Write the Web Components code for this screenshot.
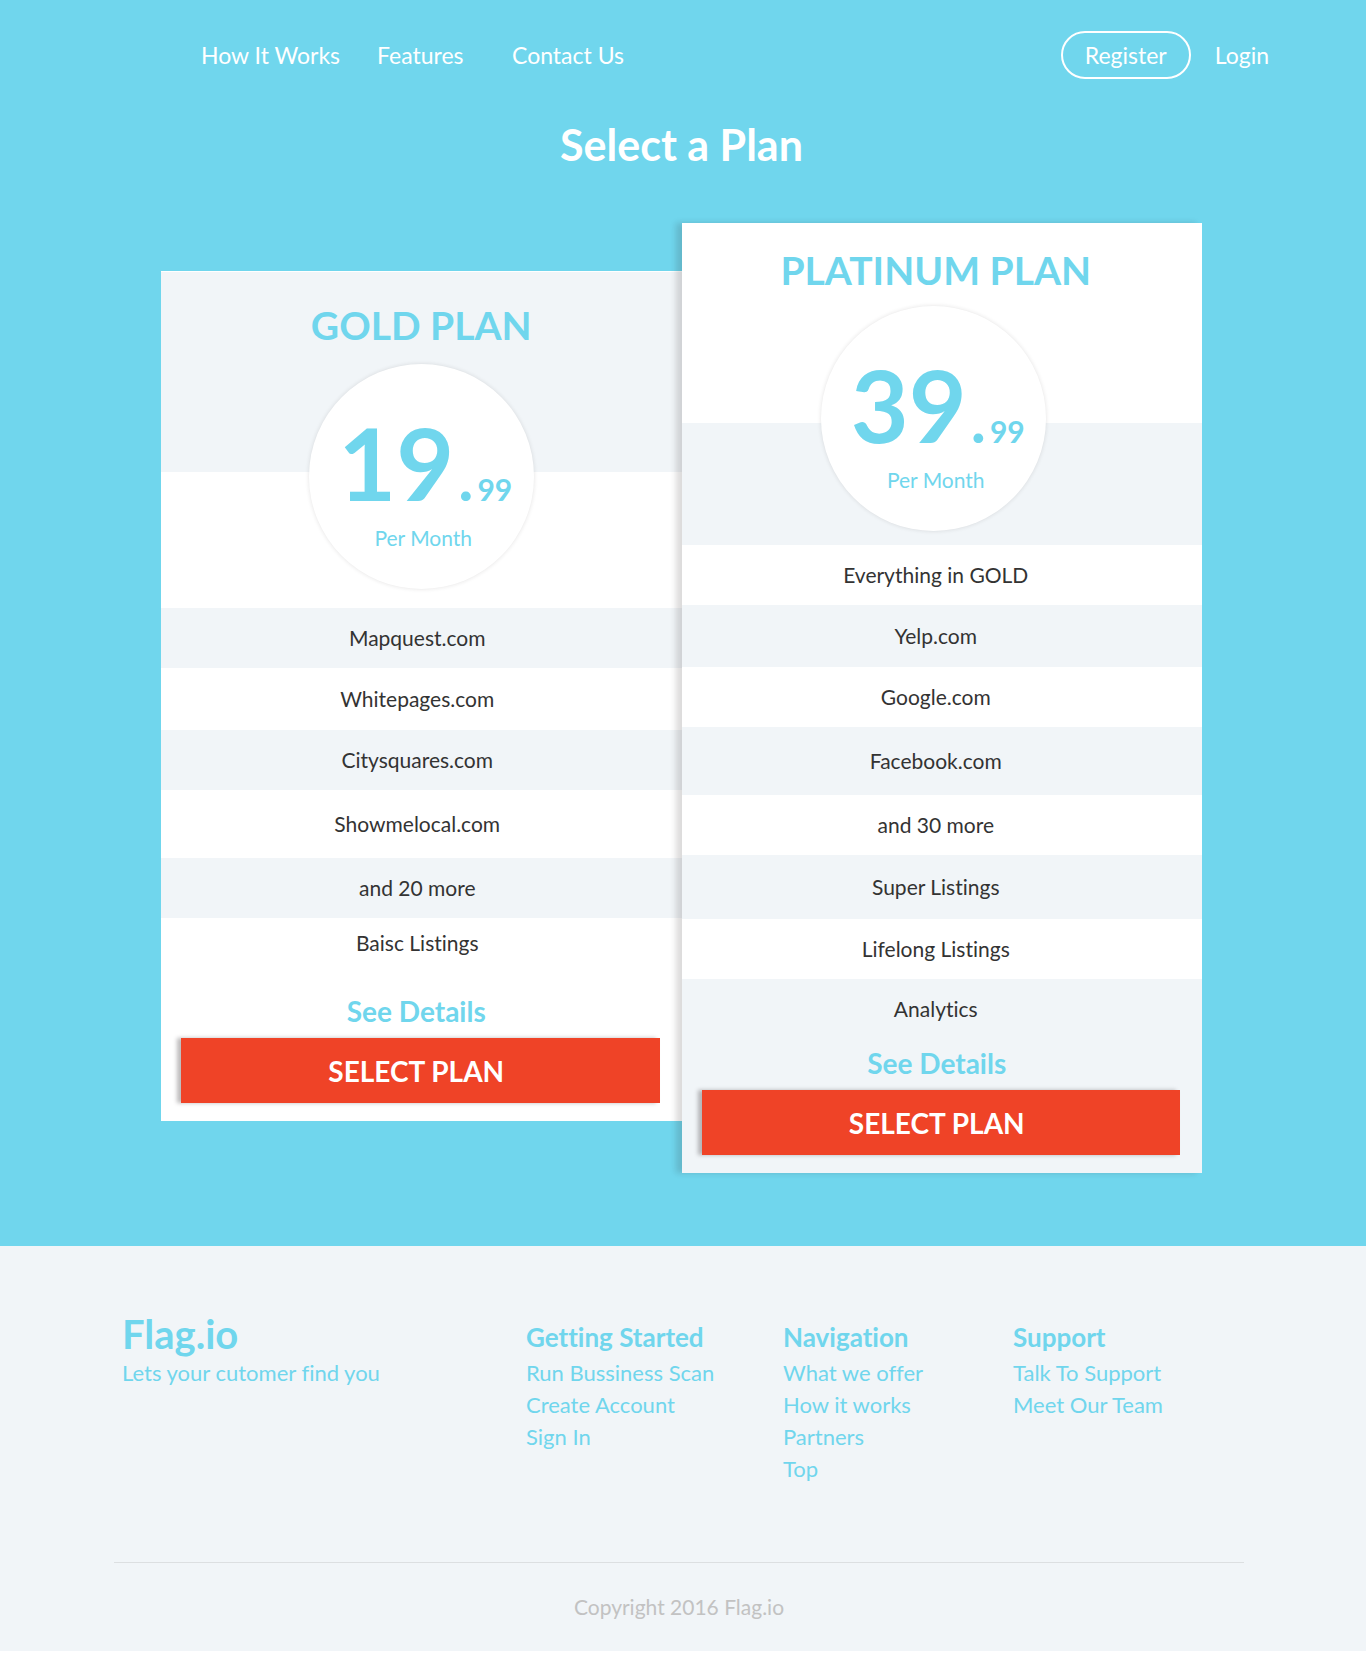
<!DOCTYPE html>
<html lang="en">
<head>
<meta charset="utf-8">
<meta name="viewport" content="width=device-width, initial-scale=1">
<title>Flag.io – Select a Plan</title>
<style>
  :root {
    --sky: #70d6ed;
    --mist: #f1f5f8;
    --red: #ef4327;
    --ink: #333333;
  }
  body { margin: 0; background: #ffffff; font-family: Lato, "Liberation Sans", sans-serif; font-variant-ligatures: none; }
</style>
</head>
<body>
<pricing-page></pricing-page>

<script>
  const define = (name, html, setup) => {
    const template = document.createElement('template');
    template.innerHTML = html;
    customElements.define(name, class extends HTMLElement {
      constructor() {
        super();
        this.attachShadow({ mode: 'open' }).append(template.content.cloneNode(true));
      }
      connectedCallback() { if (setup) setup(this, this.shadowRoot); }
    });
  };

  /* A white link in the top bar; the "outlined" variant draws a pill. */
  define('nav-link', `
    <style>
      :host { display: block; }
      a { display: block; color: #ffffff; text-decoration: none; font-size: 23px; line-height: 28px; white-space: nowrap; }
      :host([outlined]) a { padding: 8px 22px; border: 2px solid #ffffff; border-radius: 24px; }
    </style>
    <a href="#"><slot></slot></a>
  `);

  define('site-header', `
    <style>
      :host { display: block; padding: 31px 97px 0 201px; }
      nav, .account { display: flex; align-items: center; }
      nav { justify-content: space-between; }
      .links { display: grid; grid-template-columns: 176px 135px auto; }
      .account { gap: 24px; }
    </style>
    <nav aria-label="Main">
      <div class="links">
        <nav-link>How It Works</nav-link>
        <nav-link>Features</nav-link>
        <nav-link>Contact Us</nav-link>
      </div>
      <div class="account">
        <nav-link outlined>Register</nav-link>
        <nav-link>Login</nav-link>
      </div>
    </nav>
  `);

  define('price-badge', `
    <style>
      :host { display: block; }
      .disc {
        box-sizing: border-box; width: 225px; height: 225px; padding-top: 58px; border-radius: 50%;
        background: #ffffff; color: var(--sky); box-shadow: 0 0 4px rgba(35, 31, 32, .13);
        text-align: center;
      }
      .price { display: flex; justify-content: center; align-items: baseline; gap: 4px; padding-left: 8px; font-weight: 700; line-height: 24px; }
      .whole { font-size: 100px; line-height: 80px; }
      .dot { font-size: 64px; }
      .cents { font-size: 30px; }
      .term { margin-top: 22px; padding-left: 4px; font-size: 21px; line-height: 28px; }
    </style>
    <div class="disc">
      <div class="price"><span class="whole"></span><span class="dot">.</span><span class="cents"></span></div>
      <div class="term">Per Month</div>
    </div>
  `, (host, root) => {
    root.querySelector('.whole').textContent = host.getAttribute('whole');
    root.querySelector('.cents').textContent = host.getAttribute('cents');
  });

  define('plan-feature', `
    <style>
      :host {
        display: flex; justify-content: center; align-items: center; box-sizing: border-box;
        min-height: 60px; color: var(--ink); font-size: 21px; line-height: 28px;
      }
    </style>
    <span><slot></slot></span>
  `);

  define('plan-card', `
    <style>
      :host { display: block; position: relative; background: #ffffff; }
      header { box-sizing: border-box; height: 200px; padding: var(--title-top) var(--title-shift) 0 0; background: var(--head); }
      h2 { margin: 0; color: var(--sky); font-size: 39px; line-height: 50px; font-weight: 700; text-align: center; }
      .intro { display: flex; justify-content: center; box-sizing: border-box; height: var(--intro); padding-right: var(--badge-shift); background: var(--body); }
      price-badge { margin-top: var(--lift); }
      ::slotted(plan-feature) { padding-right: var(--row-shift); }
      .actions { padding: var(--actions-top) 22px 18px 20px; background: var(--foot); }
      .details {
        display: block; margin-bottom: 11px; padding-right: 8px; color: var(--sky); text-decoration: none; text-align: center;
        font-size: 28px; line-height: 32px; font-weight: 700;
      }
      button {
        display: block; width: 100%; height: 65px; margin: 0; padding: 0 8px 0 0;
        border: 0; background: var(--red); color: #ffffff; font: 700 28px/32px Lato, "Liberation Sans", sans-serif;
        box-shadow: -4px 0 4px rgba(35, 31, 32, .3);
      }
    </style>
    <header><h2></h2></header>
    <div class="intro"><price-badge></price-badge></div>
    <div class="features"><slot></slot></div>
    <div class="actions">
      <a class="details" href="#">See Details</a>
      <button type="button">SELECT PLAN</button>
    </div>
  `, (host, root) => {
    root.querySelector('h2').textContent = host.getAttribute('name');
    const badge = root.querySelector('price-badge');
    for (const key of ['whole', 'cents']) {
      badge.setAttribute(key, host.getAttribute(key));
      badge.shadowRoot.querySelector('.' + key).textContent = host.getAttribute(key);
    }
  });

  define('plan-section', `
    <style>
      :host { display: block; padding: 0 164px 73px 161px; }
      h1 { margin: 0; padding: 40px 0 52px; color: #ffffff; font-size: 43px; line-height: 52px; font-weight: 700; text-align: center; }
      .plans { display: grid; grid-template-columns: 1fr 1fr; align-items: start; }
      .gold {
        --head: var(--mist); --body: #ffffff; --foot: #ffffff;
        --title-top: 28px; --title-shift: 0px; --badge-shift: 0px; --row-shift: 8px;
        --intro: 136px; --lift: -108px; --actions-top: 27px;
        margin-top: 48px; border-top: 1px solid #ffffff;
      }
      .platinum {
        --head: #ffffff; --body: var(--mist); --foot: var(--mist);
        --title-top: 22px; --title-shift: 12px; --badge-shift: 16px; --row-shift: 12px;
        --intro: 122px; --lift: -117px; --actions-top: 8px;
        box-shadow: -6px 0 6px rgba(35, 31, 32, .16);
      }
      .gold plan-feature:nth-of-type(odd), .platinum plan-feature:nth-of-type(even) { background: var(--mist); }
      .tall { min-height: 68px; }
      .mid { min-height: 62px; }
      .roomy { min-height: 64px; }
      .short { min-height: 50px; }
    </style>
    <h1>Select a Plan</h1>
    <div class="plans">
      <plan-card class="gold" name="GOLD PLAN" whole="19" cents="99">
        <plan-feature>Mapquest.com</plan-feature>
        <plan-feature class="mid">Whitepages.com</plan-feature>
        <plan-feature>Citysquares.com</plan-feature>
        <plan-feature class="tall">Showmelocal.com</plan-feature>
        <plan-feature>and 20 more</plan-feature>
        <plan-feature class="short">Baisc Listings</plan-feature>
      </plan-card>
      <plan-card class="platinum" name="PLATINUM PLAN" whole="39" cents="99">
        <plan-feature>Everything in GOLD</plan-feature>
        <plan-feature class="mid">Yelp.com</plan-feature>
        <plan-feature>Google.com</plan-feature>
        <plan-feature class="tall">Facebook.com</plan-feature>
        <plan-feature>and 30 more</plan-feature>
        <plan-feature class="roomy">Super Listings</plan-feature>
        <plan-feature>Lifelong Listings</plan-feature>
        <plan-feature>Analytics</plan-feature>
      </plan-card>
    </div>
  `);

  define('footer-group', `
    <style>
      :host { display: block; color: var(--sky); }
      h3 { margin: 0; padding-top: 6px; font-size: 26px; line-height: 40px; font-weight: 700; }
      ::slotted(a) { display: block; color: var(--sky); text-decoration: none; font-size: 22px; line-height: 32px; white-space: nowrap; }
    </style>
    <h3></h3>
    <slot></slot>
  `, (host, root) => { root.querySelector('h3').textContent = host.getAttribute('heading'); });

  define('site-footer', `
    <style>
      :host { display: block; padding: 65px 122px 28px 114px; background: var(--mist); color: var(--sky); }
      .columns { display: grid; grid-template-columns: 404px 257px 230px 1fr; box-sizing: border-box; min-height: 251px; padding-left: 8px; }
      .brand { font-size: 40px; line-height: 46px; font-weight: 700; }
      .tagline { margin: 0; font-size: 22px; line-height: 32px; }
      .copyright { margin: 0; padding-top: 28px; border-top: 1px solid #dcdfe1; color: #c2c2c2; font-size: 21px; line-height: 32px; text-align: center; }
    </style>
    <div class="columns">
      <div><div class="brand">Flag.io</div><p class="tagline">Lets your cutomer find you</p></div>
      <footer-group heading="Getting Started"><a href="#">Run Bussiness Scan</a><a href="#">Create Account</a><a href="#">Sign In</a></footer-group>
      <footer-group heading="Navigation"><a href="#">What we offer</a><a href="#">How it works</a><a href="#">Partners</a><a href="#">Top</a></footer-group>
      <footer-group heading="Support"><a href="#">Talk To Support</a><a href="#">Meet Our Team</a></footer-group>
    </div>
    <p class="copyright">Copyright 2016 Flag.io</p>
  `);

  define('pricing-page', `
    <style>
      :host { display: block; }
      main { background: var(--sky); }
    </style>
    <main>
      <site-header></site-header>
      <plan-section></plan-section>
    </main>
    <site-footer></site-footer>
  `);
</script>
</body>
</html>
